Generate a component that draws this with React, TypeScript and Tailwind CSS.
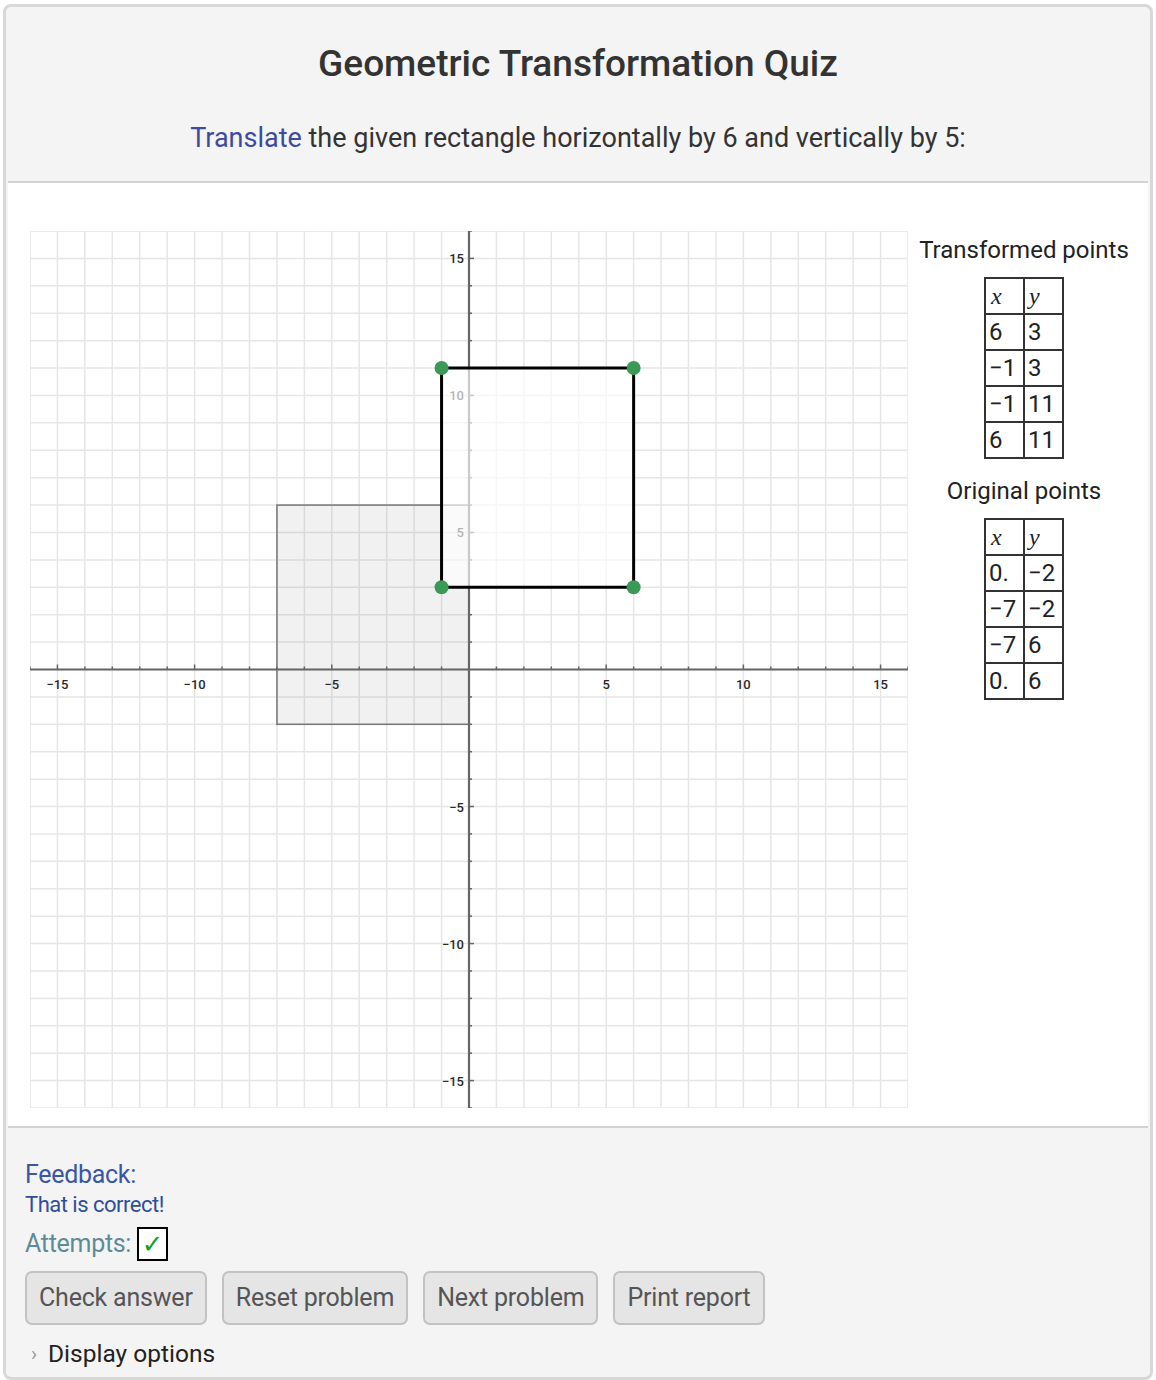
import React from "react";

const W = 878;
const H = 877;
const UX = W / 32;
const UY = H / 32;
const px = (x: number) => W / 2 + x * UX;
const py = (y: number) => H / 2 - y * UY;

const units = Array.from({ length: 33 }, (_, i) => i - 16);
const labels = [-15, -10, -5, 5, 10, 15];

const transformed = [
  [6, 3],
  [-1, 3],
  [-1, 11],
  [6, 11],
];
const original = [
  ["0.", "\u22122"],
  ["\u22127", "\u22122"],
  ["\u22127", "6"],
  ["0.", "6"],
];

function fmt(n: number) {
  return n < 0 ? `\u2212${-n}` : `${n}`;
}

function Graph() {
  const poly = transformed.map(([x, y]) => `${px(x)},${py(y)}`).join(" ");
  return (
    <svg width={W} height={H} viewBox={`0 0 ${W} ${H}`} className="shrink-0">
      {units.map((u) => (
        <g key={u}>
          <line x1={px(u)} y1={0} x2={px(u)} y2={H} stroke="#e6e6e6" strokeWidth={1.5} />
          <line x1={0} y1={py(u)} x2={W} y2={py(u)} stroke="#e6e6e6" strokeWidth={1.5} />
        </g>
      ))}
      {/* original shape */}
      <rect
        x={px(-7)}
        y={py(6)}
        width={7 * UX}
        height={8 * UY}
        fill="#000"
        fillOpacity={0.055}
        stroke="#777"
        strokeWidth={1.5}
      />
      {/* axes */}
      <line x1={0} y1={py(0)} x2={W} y2={py(0)} stroke="#666" strokeWidth={2.2} />
      <line x1={px(0)} y1={0} x2={px(0)} y2={H} stroke="#666" strokeWidth={2.2} />
      {units.map((u) =>
        u === 0 ? null : (
          <g key={`t${u}`}>
            <line
              x1={px(u)}
              y1={py(0) - (u % 5 === 0 ? 5 : 3)}
              x2={px(u)}
              y2={py(0)}
              stroke="#666"
              strokeWidth={1.5}
            />
            <line
              x1={px(0)}
              y1={py(u)}
              x2={px(0) + (u % 5 === 0 ? 5 : 3)}
              y2={py(u)}
              stroke="#666"
              strokeWidth={1.5}
            />
          </g>
        )
      )}
      {labels.map((l) => (
        <g
          key={`l${l}`}
          fontFamily="Roboto, 'Liberation Sans', sans-serif"
          fontSize={13}
          fontWeight={500}
          fill="#2a2a2a"
        >
          <text x={px(l)} y={py(0) + 19} textAnchor="middle">
            {fmt(l)}
          </text>
          <text x={px(0) - 5} y={py(l) + 5} textAnchor="end">
            {fmt(l)}
          </text>
        </g>
      ))}
      {/* transformed shape */}
      <polygon points={poly} fill="#fff" fillOpacity={0.65} stroke="#000" strokeWidth={3} />
      {transformed.map(([x, y]) => (
        <circle key={`${x},${y}`} cx={px(x)} cy={py(y)} r={7} fill="#3a9a55" />
      ))}
    </svg>
  );
}

function PointTable({ rows }: { rows: string[][] }) {
  return (
    <table className="border-collapse border-2 border-[#333] text-[24px] leading-none text-[#222]">
      <tbody>
        <tr className="h-[36px]">
          <td className="border-2 border-[#333] w-[39px] px-[5px] text-left font-['Liberation_Serif',serif] italic">x</td>
          <td className="border-2 border-[#333] w-[39px] px-[4px] text-left font-['Liberation_Serif',serif] italic">y</td>
        </tr>
        {rows.map((r, i) => (
          <tr key={i} className="h-[36px]">
            <td className="border-2 border-[#333] px-[3px] text-left">{r[0]}</td>
            <td className="border-2 border-[#333] px-[3px] text-left">{r[1]}</td>
          </tr>
        ))}
      </tbody>
    </table>
  );
}

export default function App() {
  return (
    <div className="bg-white pt-[4px] px-[3px] font-['Roboto','Liberation_Sans',sans-serif]">
      <div className="border-[3px] border-[#d8d8d8] rounded-[8px] bg-[#f4f4f4] p-[2px]">
        <div className="flex flex-col items-center pt-[34px] pb-[27px] border-b-2 border-[#d2d2d2]">
          <h1 className="text-[37px] leading-[42px] font-medium text-[#333]">Geometric Transformation Quiz</h1>
          <p className="mt-[37px] text-[27px] leading-[32px] text-[#333]">
            <span className="text-[#3c4ba0]">Translate</span> the given rectangle horizontally by 6 and vertically by 5:
          </p>
        </div>

        <div className="flex bg-white pl-[22px] pt-[48px] pb-[18px] border-b-2 border-[#d2d2d2]">
          <Graph />
          <div className="flex-1 flex flex-col items-center pt-[5px] pr-[8px]">
            <div className="text-[24px] leading-[28px] text-[#222]">Transformed points</div>
            <div className="mt-[13px]">
              <PointTable rows={transformed.map(([x, y]) => [fmt(x), fmt(y)])} />
            </div>
            <div className="mt-[18px] text-[24px] leading-[28px] text-[#222]">Original points</div>
            <div className="mt-[13px]">
              <PointTable rows={original} />
            </div>
          </div>
        </div>

        <div className="px-[17px] pt-[33px] pb-[7px]">
          <div className="text-[25px] leading-[28px] text-[#3a56a5] tracking-[-0.3px]">Feedback:</div>
          <div className="mt-[4px] text-[22px] leading-[24px] text-[#2f4f9e] tracking-[-0.5px]">That is correct!</div>
          <div className="mt-[10px] flex items-center gap-[6px]">
            <span className="text-[25px] leading-[28px] text-[#5d8b98] tracking-[-0.3px]">Attempts:</span>
            <span className="w-[31px] h-[34px] border-2 border-black bg-white flex items-center justify-center text-[26px] font-bold text-[#16a016] font-['DejaVu_Sans',sans-serif]">
              {"\u2713"}
            </span>
          </div>
          <div className="mt-[10px] flex gap-[15px]">
            {["Check answer", "Reset problem", "Next problem", "Print report"].map((b) => (
              <button
                key={b}
                className="h-[54px] px-[12px] rounded-[7px] border-2 border-[#c2c2c2] bg-[#e5e5e5] text-[25px] text-[#555] tracking-[-0.2px]"
              >
                {b}
              </button>
            ))}
          </div>
          <div className="mt-[15px] flex items-center gap-[11px] pl-[6px]">
            <span className="text-[20px] leading-[28px] text-[#999]">{"\u203A"}</span>
            <span className="text-[24.5px] leading-[28px] text-[#222]">Display options</span>
          </div>
        </div>
      </div>
    </div>
  );
}
